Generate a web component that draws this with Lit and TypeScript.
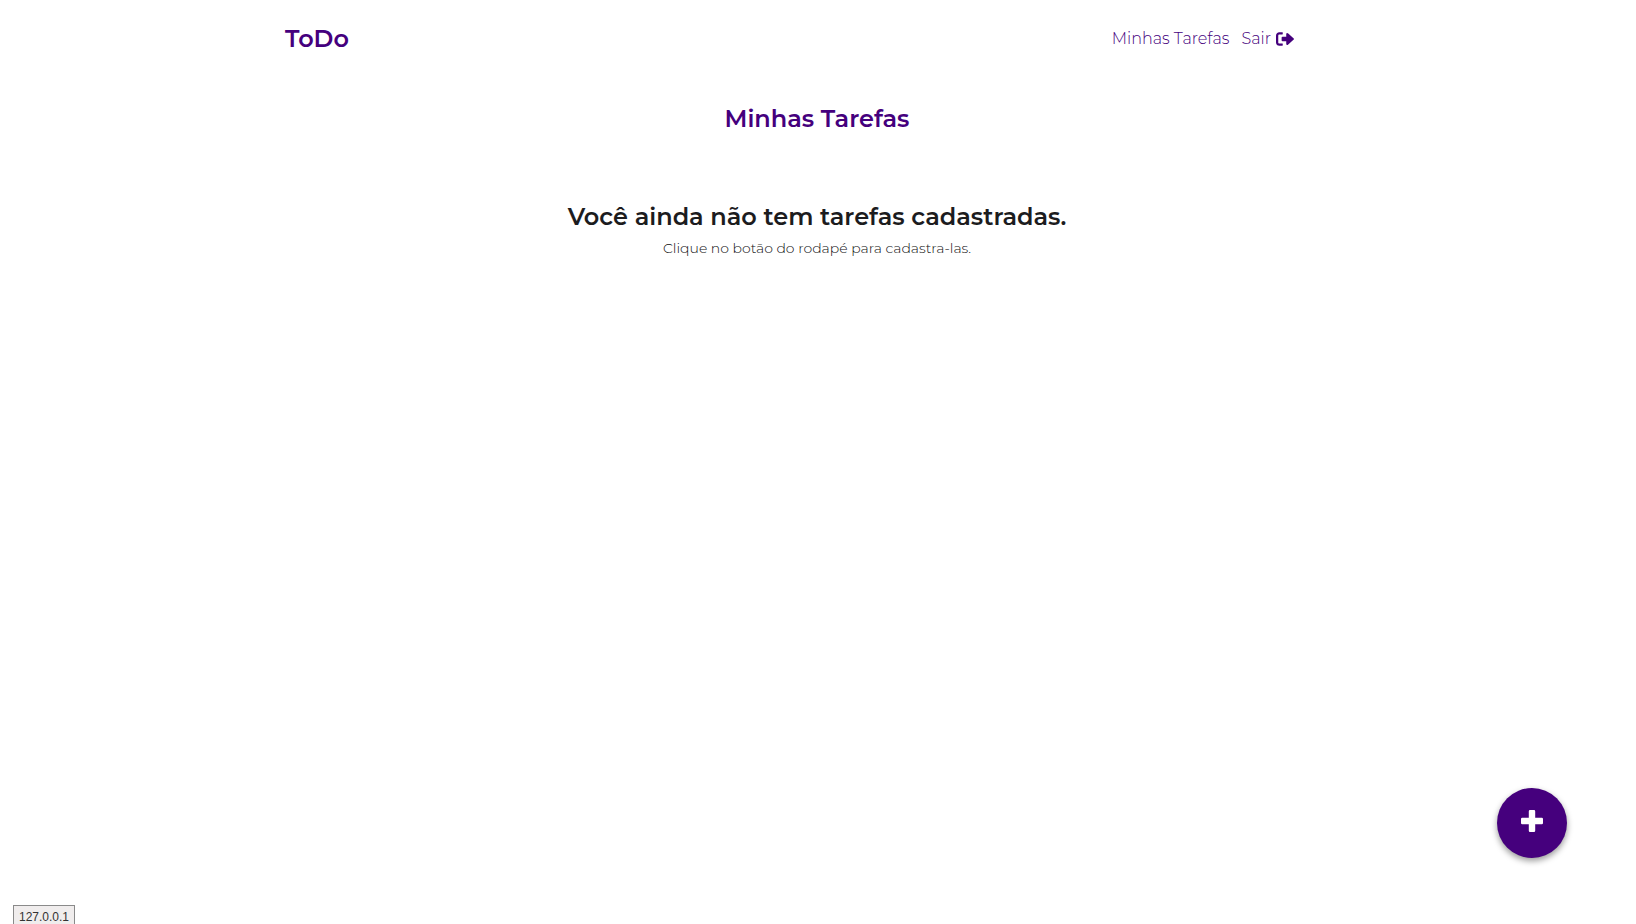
import { LitElement, html, css } from "lit";
import { customElement } from "lit/decorators.js";

@customElement("app-root")
export class AppRoot extends LitElement {
  static styles = css`
    :host {
      display: block;
      position: relative;
      min-height: 100vh;
      overflow: hidden;
      box-sizing: border-box;
      background: #fff;
      color: #212529;
      font-family: Montserrat, Inter, "Open Sans", sans-serif;
      font-size: 16px;
      font-weight: 300;
      line-height: 24px;
    }
    .bar {
      display: flex;
      align-items: center;
      justify-content: space-between;
      box-sizing: border-box;
      max-width: 1140px;
      height: 78px;
      margin: 0 auto;
      padding: 0 94px 0 37px;
    }
    a {
      color: #45007d;
      text-decoration: none;
    }
    .brand {
      font-size: 24px;
      font-weight: 600;
    }
    .links {
      display: flex;
      gap: 12px;
    }
    .exit {
      display: flex;
      align-items: center;
      gap: 5px;
    }
    .exit svg {
      width: 18px;
      height: 18px;
    }
    main {
      padding-right: 2px;
      text-align: center;
    }
    h1,
    h2,
    p {
      margin: 0;
    }
    h1,
    h2 {
      font-size: 24px;
      line-height: 30px;
      font-weight: 600;
    }
    h1 {
      padding-top: 26px;
      color: #45007d;
    }
    h2 {
      padding-top: 68px;
      color: #1c1c1e;
    }
    p {
      padding-top: 4px;
      font-size: 14px;
      color: #111;
    }
    .add {
      position: absolute;
      right: 69px;
      bottom: 66px;
      display: grid;
      place-items: center;
      width: 70px;
      height: 70px;
      padding: 0 0 4px;
      border: 0;
      border-radius: 50%;
      background: #45007d;
      box-shadow: 0 3px 6px rgba(0, 0, 0, 0.4);
      cursor: pointer;
    }
    .add svg {
      width: 24px;
      height: 24px;
    }
    .status {
      position: absolute;
      left: 13px;
      bottom: -4px;
      box-sizing: border-box;
      height: 23px;
      padding: 0 5px;
      border: 1px solid #8a8a8a;
      background: #f0eded;
      color: #333;
      font: 400 12px/22px "Liberation Sans", Arial, sans-serif;
    }
  `;

  render() {
    return html`
      <header class="bar">
        <a class="brand" href="#">ToDo</a>
        <nav class="links">
          <a href="#tarefas">Minhas Tarefas</a>
          <a class="exit" href="#sair"
            >Sair
            <svg viewBox="0 0 512 512" fill="#45007d" aria-hidden="true">
              <path
                d="M180 448H96c-53 0-96-43-96-96V160c0-53 43-96 96-96h84c6.600 0 12 5.400 12 12v40c0 6.600-5.400 12-12 12H96c-17.700 0-32 14.300-32 32v192c0 17.700 14.300 32 32 32h84c6.600 0 12 5.400 12 12v40c0 6.600-5.400 12-12 12zM291 127v65H184c-13.300 0-24 10.700-24 24v80c0 13.300 10.700 24 24 24h107v65c0 42 27.100 56.900 57 27L505 273c9.400-9.400 9.400-24.600 0-34L348 100c-29.900-29.900-57-15-57 27z"
              />
            </svg>
          </a>
        </nav>
      </header>
      <main>
        <h1>Minhas Tarefas</h1>
        <h2>Você ainda não tem tarefas cadastradas.</h2>
        <p>Clique no botão do rodapé para cadastra-las.</p>
      </main>
      <button class="add" type="button" aria-label="Adicionar tarefa">
        <svg viewBox="0 0 24 24" fill="#fff" aria-hidden="true">
          <path
            d="M10 1h4a1.200 1.200 0 0 1 1.200 1.200v6.600h6.600A1.200 1.200 0 0 1 23 10v4a1.200 1.200 0 0 1-1.200 1.200h-6.600v6.600A1.200 1.200 0 0 1 14 23h-4a1.200 1.200 0 0 1-1.200-1.200v-6.600H2.200A1.200 1.200 0 0 1 1 14v-4a1.200 1.200 0 0 1 1.200-1.200h6.600V2.200A1.200 1.200 0 0 1 10 1z"
          />
        </svg>
      </button>
      <div class="status">127.0.0.1</div>
    `;
  }
}
